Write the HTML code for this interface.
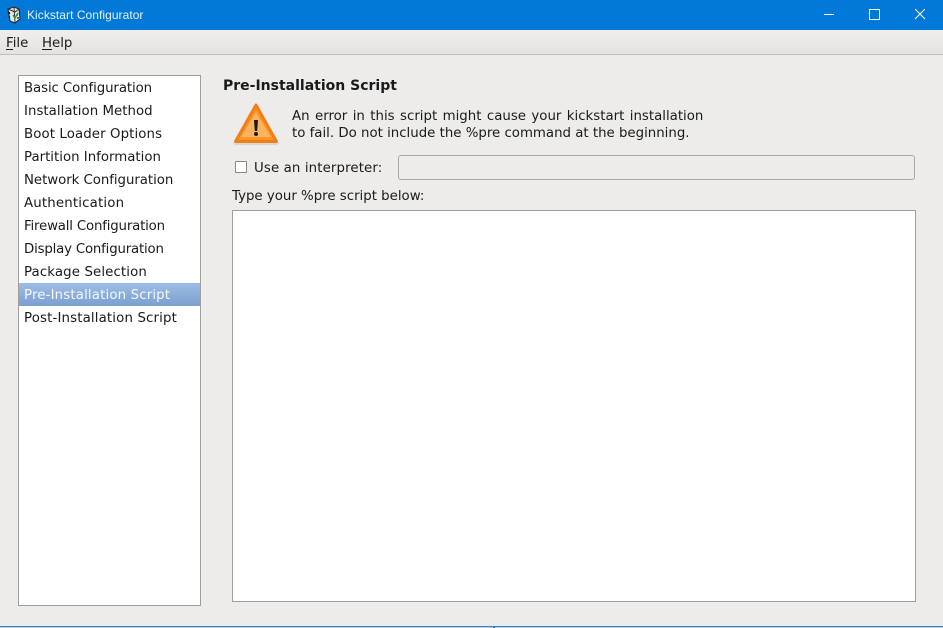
<!DOCTYPE html>
<html><head><meta charset="utf-8">
<style>
html,body{margin:0;padding:0;width:943px;height:628px;overflow:hidden;background:#edecea}
body{position:relative;font-family:"DejaVu Sans",sans-serif;font-size:13.33px;color:#1a1a1a}
.a{position:absolute;white-space:pre;line-height:17px}
.row{position:absolute;left:0;width:181px;height:23px;line-height:23px;padding:1px 0 0 5px;box-sizing:border-box;white-space:pre}
</style></head><body>
<div style="position:absolute;left:0;top:0;width:943px;height:30px;background:#0078d7"></div>
<svg style="position:absolute;left:6px;top:6px" width="16" height="18" viewBox="0 0 16 18">
<path d="M2 3 L8 1 L13 3 L14 13 L9 17 L4 15 Z" fill="#e8e8e8" stroke="#222" stroke-width="1"/>
<path d="M8 1 L9 17 M2 3 L9 6 L13 3" fill="none" stroke="#333" stroke-width="1"/>
<path d="M3.500 6v2M3.500 10v2M11 8v2M12 11v2" stroke="#111" stroke-width="1.200"/>
<path d="M7 9 L9 12 L12 7" fill="none" stroke="#1e9a4a" stroke-width="1.500"/>
</svg>
<div class="a" style="left:27px;top:7px;font:12px/17px 'Liberation Sans',sans-serif;color:#e6f2fb;letter-spacing:.05px">Kickstart Configurator</div>
<div style="position:absolute;left:824px;top:14px;width:10px;height:1px;background:#fff"></div>
<div style="position:absolute;left:869px;top:9px;width:11px;height:11px;box-sizing:border-box;border:1px solid #fff"></div>
<svg style="position:absolute;left:914px;top:8px" width="12" height="12" viewBox="0 0 12 12"><path d="M1 1L11 11M11 1L1 11" stroke="#fff" stroke-width="1"/></svg>

<div style="position:absolute;left:0;top:30px;width:943px;height:24px;background:linear-gradient(#efeeec,#e5e3e0)"></div>
<div style="position:absolute;left:0;top:54px;width:943px;height:1px;background:#c2c0bc"></div>
<div class="a" style="left:6px;top:35px">File</div>
<div style="position:absolute;left:6px;top:49px;width:7px;height:1px;background:#1a1a1a"></div>
<div class="a" style="left:42px;top:35px">Help</div>
<div style="position:absolute;left:42px;top:49px;width:10px;height:1px;background:#1a1a1a"></div>

<div style="position:absolute;left:18px;top:75px;width:183px;height:531px;box-sizing:border-box;border:1px solid #a09e9a;background:#fff">
<div class="row" style="top:0;letter-spacing:-.1px">Basic Configuration</div>
<div class="row" style="top:23px;letter-spacing:.03px">Installation Method</div>
<div class="row" style="top:46px;letter-spacing:.1px">Boot Loader Options</div>
<div class="row" style="top:69px">Partition Information</div>
<div class="row" style="top:92px;letter-spacing:-.05px">Network Configuration</div>
<div class="row" style="top:115px;letter-spacing:.17px">Authentication</div>
<div class="row" style="top:138px;letter-spacing:-.18px">Firewall Configuration</div>
<div class="row" style="top:161px;letter-spacing:-.19px">Display Configuration</div>
<div class="row" style="top:184px;letter-spacing:.12px">Package Selection</div>
<div class="row" style="top:207px;background:linear-gradient(#9ebde4,#7a9fd0);color:#f4f7fb;letter-spacing:.15px">Pre-Installation Script</div>
<div class="row" style="top:230px;letter-spacing:.15px">Post-Installation Script</div>
</div>

<div class="a" style="left:223px;top:78px;font-size:14px;font-weight:bold">Pre-Installation Script</div>

<svg style="position:absolute;left:232px;top:101px" width="48" height="48" viewBox="0 0 48 48">
<path d="M24 5 L44.500 41 L3.500 41 Z" fill="#c4c2be" opacity=".5" stroke="#c4c2be" stroke-width="4" stroke-linejoin="round" transform="translate(0 1)"/>
<path d="M24 4 L44.500 40.500 L3.500 40.500 Z" fill="#f9952a" stroke="#f07f14" stroke-width="3" stroke-linejoin="round"/>
<path d="M24 11.500 L39 36 L9 36 Z" fill="#fbb360"/>
<path d="M22 19 L26 19 L25.200 30 L22.800 30 Z" fill="#1a1a1a"/>
<circle cx="24" cy="33" r="2" fill="#1a1a1a"/>
</svg>

<div class="a" style="left:292px;top:108px;word-spacing:1.2px">An error in this script might cause your kickstart installation</div>
<div class="a" style="left:292px;top:125px">to fail. Do not include the %pre command at the beginning.</div>

<div style="position:absolute;left:235px;top:161px;width:12px;height:12px;box-sizing:border-box;border:1px solid #8a8884;border-radius:1px;background:#fff"></div>
<div class="a" style="left:254px;top:160px;letter-spacing:.12px">Use an interpreter:</div>
<div style="position:absolute;left:398px;top:155px;width:517px;height:25px;box-sizing:border-box;border:1px solid #aaa8a4;border-radius:3px;background:#edecea"></div>
<div class="a" style="left:232px;top:188px">Type your %pre script below:</div>
<div style="position:absolute;left:232px;top:210px;width:684px;height:392px;box-sizing:border-box;border:1px solid #a09e9a;background:#fff"></div>

<div style="position:absolute;left:0;top:626px;width:943px;height:1px;background:#1e88e5"></div>
<div style="position:absolute;left:0;top:627px;width:943px;height:1px;background:#c8c8c8"></div>
<div style="position:absolute;left:493px;top:627px;width:2px;height:1px;background:#3a6ea5"></div>
</body></html>
